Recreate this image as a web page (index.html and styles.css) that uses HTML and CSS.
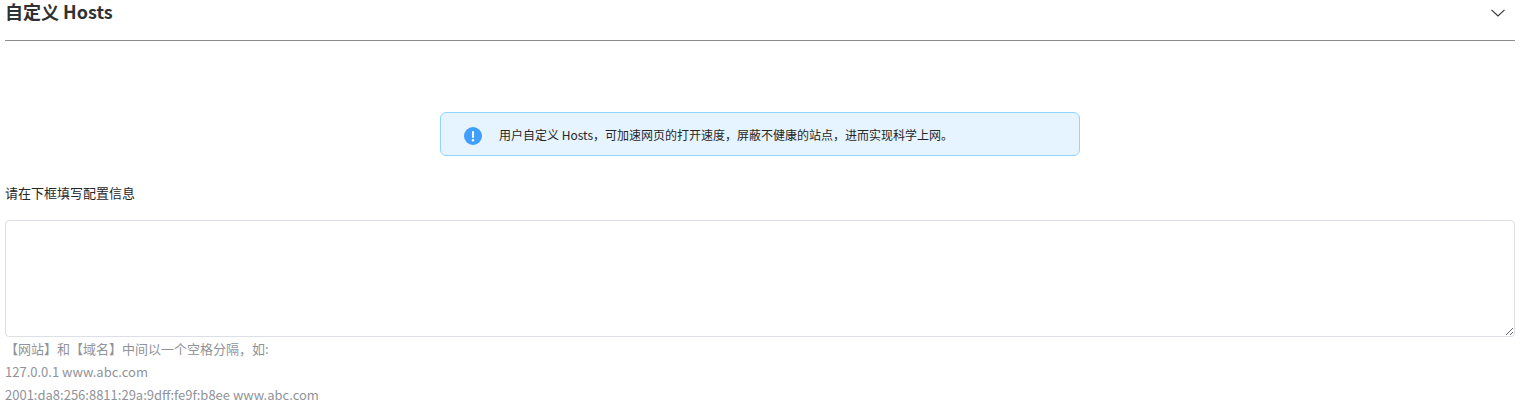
FILE: index.html
```html
<!DOCTYPE html>
<html lang="zh-CN">
<head>
  <meta charset="UTF-8">
  <title>自定义 Hosts</title>
  <link rel="stylesheet" href="styles.css">
</head>
<body>
  <div class="panel">
    <div class="panel-header">
      <span class="panel-title">自定义 Hosts</span>
      <svg class="chevron" width="14" height="8" viewBox="0 0 14 8">
        <path d="M0.5 0.8 L7 7 L13.5 0.8" fill="none" stroke="#303133" stroke-width="1.1"/>
      </svg>
    </div>

    <div class="alert-row">
      <div class="alert">
        <svg class="alert-icon" width="18" height="18" viewBox="0 0 18 18">
          <circle cx="9" cy="9" r="9" fill="#409eff"/>
          <rect x="8" y="4" width="2" height="7" rx="1" fill="#fff"/>
          <circle cx="9" cy="13.2" r="1.2" fill="#fff"/>
        </svg>
        <span class="alert-text">用户自定义 Hosts，可加速网页的打开速度，屏蔽不健康的站点，进而实现科学上网。</span>
      </div>
    </div>

    <div class="field-label">请在下框填写配置信息</div>
    <textarea class="hosts-input"></textarea>
    <div class="hint">
      <div>【网站】和【域名】中间以一个空格分隔，如:</div>
      <div>127.0.0.1 www.abc.com</div>
      <div>2001:da8:256:8811:29a:9dff:fe9f:b8ee www.abc.com</div>
    </div>
  </div>
</body>
</html>
```

FILE: styles.css
```css
html, body {
  height: 100%;
  overflow: hidden;
}

body {
  margin: 0;
  background-color: #fff;
  color: #303133;
  font-family: "Noto Sans CJK SC", "Noto Sans", sans-serif;
}

.panel {
  padding: 0 8px 0 5px;
}

.panel-header {
  display: flex;
  justify-content: space-between;
  align-items: center;
  height: 25px;
  padding-bottom: 15px;
  border-bottom: 1px solid #8c8c8c;
}

.panel-title {
  margin-bottom: 2px;
  font-size: 18px;
  font-weight: 700;
  line-height: 25px;
}

.chevron {
  margin-right: 10px;
}

.alert-row {
  display: flex;
  justify-content: center;
  margin-top: 71px;
}

.alert {
  display: flex;
  align-items: center;
  width: 640px;
  height: 44px;
  box-sizing: border-box;
  padding-left: 23px;
  background-color: #e6f4ff;
  border: 1px solid #91d5ff;
  border-radius: 6px;
}

.alert-icon {
  flex-shrink: 0;
  margin: 4px 17px 0 0;
}

.alert-text {
  font-size: 12px;
  color: #262626;
}

.field-label {
  margin-top: 27px;
  font-size: 13px;
  line-height: 20px;
  color: #262626;
}

.hosts-input {
  display: block;
  width: 100%;
  height: 117px;
  box-sizing: border-box;
  margin: 17px 0 0;
  padding: 5px 11px;
  background: #fff;
  border: 1px solid #dcdfe6;
  border-radius: 4px;
  outline: none;
  font-family: inherit;
}

.hint {
  font-size: 13px;
  line-height: 23px;
  color: #909399;
}
```
